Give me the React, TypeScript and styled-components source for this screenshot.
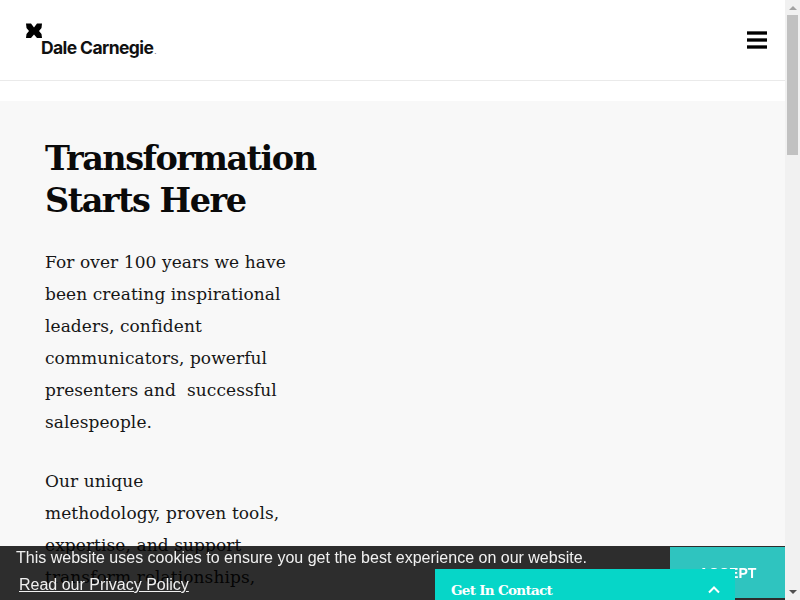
import React from 'react'
import styled, { createGlobalStyle } from 'styled-components'

const Global = createGlobalStyle`
    html, body {
        height: 100%;
        overflow: hidden;
    }
    body {
        margin: 0;
        background: #fff;
        font-family: 'DejaVu Serif', serif;
        color: #0a0a0a;
    }
`

const Page = styled.div`
    display: grid;
    grid-template-columns: 1fr 15px;
    height: 600px;
    overflow: hidden;
`

const Content = styled.div`
    min-width: 0;
    overflow: hidden;
`

const Header = styled.header`
    height: 80px;
    border-bottom: 1px solid #eaeaea;
    display: flex;
    align-items: center;
    justify-content: space-between;
    padding: 0 18px 0 26px;
`

const Logo = styled.div`
    display: flex;
    flex-direction: column;
    margin-top: 2px;
    svg {
        display: block;
    }
`

const LogoText = styled.span`
    font-family: 'Inter', 'Liberation Sans', sans-serif;
    font-weight: 700;
    font-size: 17.5px;
    line-height: 17px;
    letter-spacing: -0.6px;
    margin: 0 0 0 15px;
    color: #111;
`

const LogoDot = styled.span`
    font-size: 8px;
    font-weight: 400;
    color: #666;
    letter-spacing: 0;
    margin-left: 1px;
`

const Burger = styled.button`
    width: 20px;
    height: 18px;
    padding: 0;
    border: 0;
    background: none;
    display: flex;
    flex-direction: column;
    justify-content: space-between;
    span {
        display: block;
        height: 4px;
        background: linear-gradient(#555 0 1px, #000 1px 3px, #555 3px);
    }
`

const Hero = styled.main`
    margin-top: 20px;
    height: 1200px;
    background: #f8f8f8;
    padding: 37px 0 0 45px;
`

const Title = styled.h1`
    margin: 0 0 24px;
    width: 300px;
    font-size: 33.5px;
    line-height: 42px;
    font-weight: 700;
    letter-spacing: -1.5px;
`

const Para = styled.p`
    margin: 0 0 27px;
    width: 250px;
    font-size: 17px;
    line-height: 32px;
    letter-spacing: 0.08px;
    color: #161616;
`

const Scrollbar = styled.div`
    background: #f1f1f1;
    display: flex;
    flex-direction: column;
    align-items: center;
    justify-content: space-between;
`

const ScrollThumb = styled.div`
    width: 11px;
    height: 140px;
    margin-top: 5px;
    background: #c1c1c1;
`

const ScrollArrow = styled.div<{ $down?: boolean }>`
    width: 0;
    height: 0;
    border-left: 4px solid transparent;
    border-right: 4px solid transparent;
    ${(p) =>
        p.$down
            ? 'border-top: 4px solid #505050; margin-bottom: 6px;'
            : 'border-bottom: 4px solid #a3a3a3; margin-top: 6px;'}
`

const ScrollTrack = styled.div`
    display: flex;
    flex-direction: column;
    align-items: center;
    flex: 1;
`

const CookieBar = styled.div`
    position: fixed;
    left: 0;
    right: 15px;
    bottom: 0;
    height: 54px;
    background: rgba(0, 0, 0, 0.82);
    color: #f0f0f0;
    font-family: 'Liberation Sans', Arial, sans-serif;
    font-size: 16px;
    display: flex;
    justify-content: space-between;
`

const CookieText = styled.div`
    padding: 2px 0 0 16px;
    line-height: 20px;
    a {
        display: block;
        margin: 7px 0 0 3px;
        color: #f0f0f0;
        text-decoration: underline;
    }
`

const Accept = styled.button`
    width: 115px;
    height: 51px;
    margin-top: 1px;
    border: 0;
    padding: 0;
    background: #2fc4bf;
    color: #fff;
    font-family: 'Liberation Sans', Arial, sans-serif;
    font-size: 14px;
    font-weight: 700;
`

const Contact = styled.div`
    position: fixed;
    left: 435px;
    bottom: 0;
    width: 300px;
    height: 31px;
    box-sizing: border-box;
    background: #06d6c8;
    color: #fff;
    padding: 10px 14px 0 16px;
    display: flex;
    align-items: center;
    justify-content: space-between;
    font-size: 13.5px;
    font-weight: 700;
    letter-spacing: -0.7px;
`

export default function App(): JSX.Element {
    return (
        <Page>
            <Global />
            <Content>
                <Header>
                    <Logo>
                        <svg width="16" height="16" viewBox="0 0 16 16">
                            <path
                                d="M0 0.5 L5 0.5 L8 4.5 L11 0.5 L16 0.5 L15.5 5 L13 8 L15.5 11 L16 15 L11 15 L8 11.5 L5 15 L0 15 L0.5 11 L3 8 L0.5 5 Z"
                                fill="#000"
                            />
                        </svg>
                        <LogoText>
                            Dale Carnegie<LogoDot>.</LogoDot>
                        </LogoText>
                    </Logo>
                    <Burger aria-label="menu">
                        <span />
                        <span />
                        <span />
                    </Burger>
                </Header>
                <Hero>
                    <Title>Transformation Starts Here</Title>
                    <Para>
                        For over 100 years we have been creating inspirational
                        leaders, confident communicators, powerful presenters
                        and &nbsp;successful salespeople.
                    </Para>
                    <Para>
                        Our unique
                        <br />
                        methodology, proven tools, expertise, and support
                        transform relationships,
                    </Para>
                </Hero>
            </Content>
            <Scrollbar>
                <ScrollTrack>
                    <ScrollArrow />
                    <ScrollThumb />
                </ScrollTrack>
                <ScrollArrow $down />
            </Scrollbar>
            <CookieBar>
                <CookieText>
                    This website uses cookies to ensure you get the best
                    experience on our website.
                    <a href="#privacy">Read our Privacy Policy</a>
                </CookieText>
                <Accept>ACCEPT</Accept>
            </CookieBar>
            <Contact>
                Get In Contact
                <svg width="14" height="14" viewBox="0 0 14 14" fill="none">
                    <path d="M2 9.5 L7 4.5 L12 9.5" stroke="#fff" strokeWidth="2" />
                </svg>
            </Contact>
        </Page>
    )
}
